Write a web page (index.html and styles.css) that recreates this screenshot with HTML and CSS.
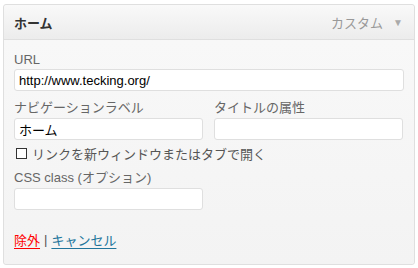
FILE: index.html
```html
<!DOCTYPE html>
<html lang="ja">
<head>
  <meta charset="UTF-8">
  <title>ホーム</title>
  <link rel="stylesheet" href="styles.css">
</head>
<body>
  <div class="menu-item">
    <div class="item-bar">
      <span class="item-title">ホーム</span>
      <span class="item-type">カスタム</span>
      <span class="item-arrow">▼</span>
    </div>

    <div class="item-settings">
      <div class="field">
        <label for="url">URL</label>
        <input type="text" id="url" value="http://www.tecking.org/">
      </div>

      <div class="field-row">
        <div class="field half">
          <label for="navLabel">ナビゲーションラベル</label>
          <input type="text" id="navLabel" value="ホーム">
        </div>
        <div class="field half">
          <label for="attrTitle">タイトルの属性</label>
          <input type="text" id="attrTitle">
        </div>
      </div>

      <div class="check-row">
        <span class="checkbox"></span>
        <span>リンクを新ウィンドウまたはタブで開く</span>
      </div>

      <div class="field half">
        <label for="cssClass">CSS class (オプション)</label>
        <input type="text" id="cssClass">
      </div>

      <div class="actions">
        <a href="#" class="remove-link">除外</a>
        <span class="sep">|</span>
        <a href="#" class="cancel-link">キャンセル</a>
      </div>
    </div>
  </div>
</body>
</html>
```

FILE: styles.css
```css
body {
  margin: 0;
  padding: 4px 3px;
  background-color: #ffffff;
  font-family: 'Liberation Sans', 'Noto Sans CJK JP', sans-serif;
  font-size: 13px;
  color: #333;
}

.menu-item {
  width: 410px;
  border: 1px solid #dfdfdf;
  border-radius: 3px;
  background-color: #f5f5f5;
}

.item-bar {
  display: flex;
  align-items: center;
  height: 34px;
  padding: 0 11px 0 10px;
  background: linear-gradient(to bottom, #f9f9f9, #ececec);
  border-bottom: 1px solid #dfdfdf;
  border-radius: 3px 3px 0 0;
}

.item-title {
  font-weight: bold;
  font-size: 13px;
  color: #333;
  flex: 1;
}

.item-type {
  color: #999;
  font-size: 13px;
}

.item-arrow {
  color: #aaa;
  font-size: 10px;
  margin-left: 10px;
}

.item-settings {
  padding: 12px 10px 15px 10px;
  background: linear-gradient(to bottom, #f8f8f8, #f3f3f3);
  border-radius: 0 0 3px 3px;
}

.field {
  display: flex;
  flex-direction: column;
  margin-bottom: 6px;
}

.field label {
  color: #666;
  margin-bottom: 2px;
}

.field input {
  height: 22px;
  box-sizing: border-box;
  border: 1px solid #dfdfdf;
  border-radius: 3px;
  background-color: #fff;
  padding: 2px 4px;
  font-family: inherit;
  font-size: 13px;
  color: #000;
}

.field-row {
  display: flex;
  gap: 11px;
}

.field-row .field {
  margin-bottom: 4px;
}

.half {
  width: 189px;
}

.check-row {
  display: flex;
  align-items: center;
  gap: 5px;
  color: #555;
  margin: 0 0 4px 2px;
}

.checkbox {
  width: 9px;
  height: 9px;
  border: 1px solid #333;
  background-color: #fff;
}

.actions {
  margin-top: 20px;
  display: flex;
  align-items: center;
  gap: 4px;
}

.actions a {
  text-decoration: underline;
  text-underline-offset: 3px;
}

.remove-link {
  color: #f00;
}

.cancel-link {
  color: #21759b;
}

.sep {
  color: #555;
}
```
